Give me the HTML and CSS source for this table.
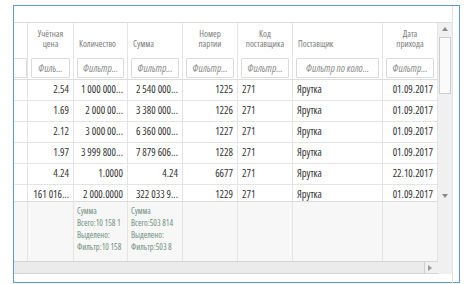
FILE: index.html
```html
<!DOCTYPE html>
<html lang="ru">
<head>
    <meta charset="UTF-8">
    <meta name="viewport" content="width=device-width, initial-scale=1.0">
    <title>Приходы</title>
    <link rel="stylesheet" href="styles.css">
</head>
<body>
    <div class="panel">
        <div class="grid-wrap">
            <div class="grid">
                <div class="grid-main">
                    <!-- заголовки -->
                    <div class="row head-row">
                        <div class="cell"></div>
                        <div class="cell center">Учётная<br>цена</div>
                        <div class="cell">Количество</div>
                        <div class="cell">Сумма</div>
                        <div class="cell center">Номер<br>партии</div>
                        <div class="cell center">Код<br>поставщика</div>
                        <div class="cell">Поставщик</div>
                        <div class="cell center">Дата<br>прихода</div>
                    </div>

                    <!-- фильтры -->
                    <div class="row filter-row">
                        <div class="cell"><input class="filter filter-cut" placeholder=""></div>
                        <div class="cell"><input class="filter" placeholder="Филь..."></div>
                        <div class="cell"><input class="filter" placeholder="Фильтр..."></div>
                        <div class="cell"><input class="filter" placeholder="Фильтр..."></div>
                        <div class="cell"><input class="filter" placeholder="Фильтр..."></div>
                        <div class="cell"><input class="filter" placeholder="Фильтр..."></div>
                        <div class="cell"><input class="filter" placeholder="Фильтр по коло..."></div>
                        <div class="cell"><input class="filter" placeholder="Фильтр..."></div>
                    </div>

                    <!-- данные -->
                    <div class="rows">
                        <div class="row data-row">
                            <div class="cell"></div>
                            <div class="cell num">2.54</div>
                            <div class="cell num">1 000 000...</div>
                            <div class="cell num">2 540 000...</div>
                            <div class="cell num">1225</div>
                            <div class="cell">271</div>
                            <div class="cell">Ярутка</div>
                            <div class="cell num">01.09.2017</div>
                        </div>
                        <div class="row data-row">
                            <div class="cell"></div>
                            <div class="cell num">1.69</div>
                            <div class="cell num">2 000 00...</div>
                            <div class="cell num">3 380 000...</div>
                            <div class="cell num">1226</div>
                            <div class="cell">271</div>
                            <div class="cell">Ярутка</div>
                            <div class="cell num">01.09.2017</div>
                        </div>
                        <div class="row data-row">
                            <div class="cell"></div>
                            <div class="cell num">2.12</div>
                            <div class="cell num">3 000 00...</div>
                            <div class="cell num">6 360 000...</div>
                            <div class="cell num">1227</div>
                            <div class="cell">271</div>
                            <div class="cell">Ярутка</div>
                            <div class="cell num">01.09.2017</div>
                        </div>
                        <div class="row data-row">
                            <div class="cell"></div>
                            <div class="cell num">1.97</div>
                            <div class="cell num">3 999 800...</div>
                            <div class="cell num">7 879 606...</div>
                            <div class="cell num">1228</div>
                            <div class="cell">271</div>
                            <div class="cell">Ярутка</div>
                            <div class="cell num">01.09.2017</div>
                        </div>
                        <div class="row data-row">
                            <div class="cell"></div>
                            <div class="cell num">4.24</div>
                            <div class="cell num">1.0000</div>
                            <div class="cell num">4.24</div>
                            <div class="cell num">6677</div>
                            <div class="cell">271</div>
                            <div class="cell">Ярутка</div>
                            <div class="cell num">22.10.2017</div>
                        </div>
                        <div class="row data-row">
                            <div class="cell"></div>
                            <div class="cell num">161 016...</div>
                            <div class="cell num">2 000.0000</div>
                            <div class="cell num">322 033 9...</div>
                            <div class="cell num">1229</div>
                            <div class="cell">271</div>
                            <div class="cell">Ярутка</div>
                            <div class="cell num">01.09.2017</div>
                        </div>
                    </div>

                    <!-- итоги -->
                    <div class="row footer-row">
                        <div class="cell"></div>
                        <div class="cell"></div>
                        <div class="cell">
                            <div>Сумма</div>
                            <div>Всего:10 158 1</div>
                            <div>Выделено:</div>
                            <div>Фильтр:10 158</div>
                        </div>
                        <div class="cell">
                            <div>Сумма</div>
                            <div>Всего:503 814</div>
                            <div>Выделено:</div>
                            <div>Фильтр:503 8</div>
                        </div>
                        <div class="cell"></div>
                        <div class="cell"></div>
                        <div class="cell"></div>
                        <div class="cell"></div>
                    </div>

                    <div class="hscroll">
                        <div class="hthumb"></div>
                        <span class="arrow arrow-right"></span>
                    </div>
                </div>

                <div class="vscroll">
                    <div class="vbar">
                        <span class="arrow arrow-up"></span>
                        <div class="vtrack"><div class="vthumb"></div></div>
                        <span class="arrow arrow-down"></span>
                    </div>
                </div>
            </div>
        </div>
    </div>
</body>
</html>
```

FILE: styles.css
```css
body {
    margin: 0;
    padding: 0;
    background-color: #fff;
    font-family: "Open Sans", "Roboto Condensed", sans-serif;
    font-stretch: 75%;
    color: #333;
}
.panel {
    margin: 5px 0 0 13px;
    width: 445px;
    height: 276px;
    border: 1px solid #5b9bd5;
}
.grid-wrap {
    width: 438px;
    height: 267px;
    padding-top: 16px;
    border-right: 1px solid #e2e2e2;
}
.grid {
    display: flex;
    border-top: 1px solid #dcdcdc;
}
.grid-main {
    width: 424px;
    display: flex;
    flex-direction: column;
}
.row {
    display: grid;
    grid-template-columns: 14px 46px 54px 55px 55px 55px 90px 55px;
}
.cell {
    box-sizing: border-box;
    border-right: 1px solid #e4e4e4;
    overflow: hidden;
    white-space: nowrap;
    padding: 0 4px;
}
.head-row {
    height: 30px;
    font-size: 9px;
    line-height: 10px;
    color: #7a7a7a;
}
.head-row .cell {
    display: flex;
    align-items: flex-end;
    padding: 0 5px 4px;
}
.head-row .center {
    justify-content: center;
    text-align: center;
}
.filter-row {
    height: 27px;
    border-bottom: 1px solid #dcdcdc;
    box-sizing: border-box;
}
.filter-row .cell {
    padding: 2px 3px 0;
}
.filter {
    box-sizing: border-box;
    width: 100%;
    height: 20px;
    border: 1px solid #dadada;
    border-radius: 1px;
    background-color: #fff;
    padding: 0 2px;
    font-family: inherit;
    font-stretch: 75%;
    font-size: 10.5px;
    text-align: center;
    outline: none;
}
.filter::placeholder {
    color: #8c8c8c;
    font-style: italic;
}
.filter-cut {
    width: 16px;
    margin-left: -6px;
}
.rows {
    height: 121px;
    overflow: hidden;
}
.data-row {
    height: 21px;
    box-sizing: border-box;
    border-bottom: 1px solid #e4e4e4;
    font-size: 10.5px;
    line-height: 19px;
}
.num {
    text-align: right;
}
.footer-row {
    height: 60px;
    box-sizing: border-box;
    border-top: 1px solid #dcdcdc;
    background-color: #f7f7f7;
    font-size: 8.5px;
    line-height: 12px;
    color: #6f8f7f;
}
.footer-row .cell {
    padding: 3px 0 0 3px;
}
.hscroll {
    position: relative;
    height: 13px;
    box-sizing: border-box;
    border-top: 1px solid #d4d4d4;
    border-bottom: 1px solid #d4d4d4;
    background-color: #f0f0f0;
}
.hthumb {
    width: 410px;
    height: 100%;
    background-color: #ebebeb;
    border-right: 1px solid #cfcfcf;
}
.arrow {
    position: absolute;
    width: 0;
    height: 0;
}
.arrow-right {
    right: 6px;
    top: 3px;
    border-top: 3px solid transparent;
    border-bottom: 3px solid transparent;
    border-left: 4px solid #999;
}
.vscroll {
    width: 14px;
    height: 251px;
    background-color: #f0f0f0;
}
.vbar {
    position: relative;
    height: 178px;
}
.arrow-up {
    left: 4px;
    top: 4px;
    border-left: 3px solid transparent;
    border-right: 3px solid transparent;
    border-bottom: 4px solid #8a8a8a;
}
.arrow-down {
    left: 4px;
    bottom: 3px;
    border-left: 3px solid transparent;
    border-right: 3px solid transparent;
    border-top: 4px solid #8a8a8a;
}
.vtrack {
    padding: 14px 1px 0;
}
.vthumb {
    height: 57px;
    box-sizing: border-box;
    border: 1px solid #cdcdcd;
    background-color: #fafafa;
}
```
